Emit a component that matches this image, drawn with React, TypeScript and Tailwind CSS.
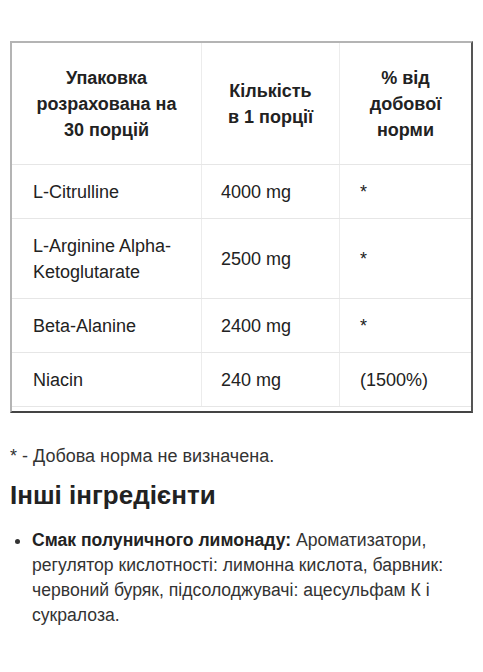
const rows = [
  { name: ["L-Citrulline"], amount: "4000 mg", daily: "*" },
  { name: ["L-Arginine Alpha-", "Ketoglutarate"], amount: "2500 mg", daily: "*" },
  { name: ["Beta-Alanine"], amount: "2400 mg", daily: "*" },
  { name: ["Niacin"], amount: "240 mg", daily: "(1500%)" },
];

export default function App() {
  return (
    <div
      className="min-h-[672px] bg-white px-[10px] pt-[41px] text-[#222] text-[18px] leading-[26px]"
      style={{ fontFamily: '"Liberation Sans", Arial, sans-serif' }}
    >
      {/* Nutrition table */}
      <div className="w-[463px] border-2 border-t-[#b4b4b4] border-l-[#b4b4b4] border-r-[#555] border-b-[#444] pb-[4px]">
        <div className="grid grid-cols-[190px_138px_1fr] border-b border-[#e6e6e6] font-bold text-center">
          <div className="flex h-[121px] items-center justify-center border-r border-[#ececec] px-2">
            <span>
              Упаковка
              <br />
              розрахована на
              <br />
              30 порцій
            </span>
          </div>
          <div className="flex items-center justify-center border-r border-[#ececec] px-2">
            <span>
              Кількість
              <br />в 1 порції
            </span>
          </div>
          <div className="flex items-center justify-center px-2">
            <span>
              % від
              <br />
              добової
              <br />
              норми
            </span>
          </div>
        </div>

        {rows.map((r, i) => (
          <div
            key={i}
            className="grid grid-cols-[190px_138px_1fr] border-b border-[#e6e6e6]"
          >
            <div className="flex items-center border-r border-[#ececec] pl-[21px] pr-2 py-[13.5px]">
              <span>
                {r.name.map((n, j) => (
                  <span key={j} className="block">
                    {n}
                  </span>
                ))}
              </span>
            </div>
            <div className="flex items-center border-r border-[#ececec] pl-[19px] pr-2">
              {r.amount}
            </div>
            <div className="flex items-center pl-[20px] pr-2">{r.daily}</div>
          </div>
        ))}
      </div>

      <p className="mt-[30px] text-[#333]">* - Добова норма не визначена.</p>

      <h2 className="mt-[9px] text-[26px] font-bold leading-[34px] text-[#222]">
        Інші інгредієнти
      </h2>

      <ul className="mt-[16px] list-disc pl-[22px] text-[#333] pr-[8px] text-[17.6px] leading-[25px]">
        <li>
          <b className="text-[#222]">Смак полуничного лимонаду:</b> Ароматизатори,
          регулятор кислотності: лимонна кислота, барвник: червоний буряк,
          підсолоджувачі: ацесульфам К і сукралоза.
        </li>
      </ul>
    </div>
  );
}
